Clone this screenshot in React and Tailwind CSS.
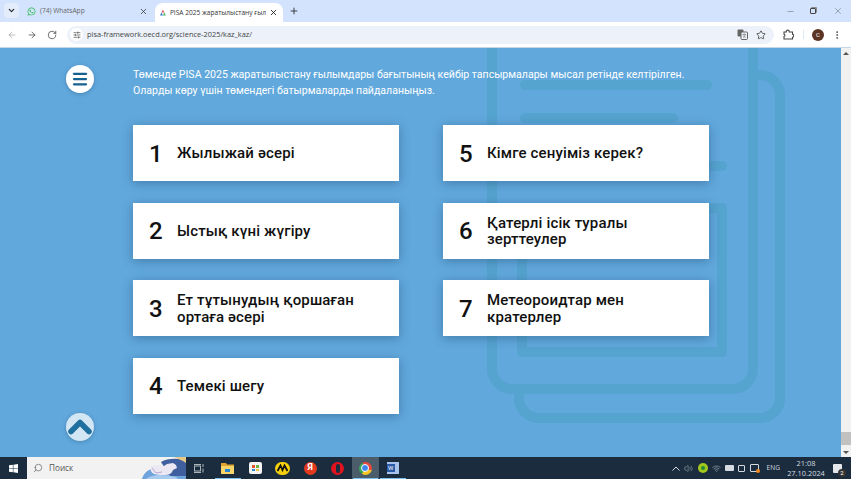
import React from "react";
import { FaWhatsapp } from "react-icons/fa";
import { ChevronDown, X, Plus, ArrowLeft, ArrowRight, RotateCw, SlidersHorizontal, Star, EllipsisVertical, Minus, Menu, ChevronUp, Search, Volume2, Wifi } from "lucide-react";

const left = [["1", "Жылыжай әсері"], ["2", "Ыстық күні жүгіру"], ["3", "Ет тұтынудың қоршаған ортаға әсері"], ["4", "Темекі шегу"]];
const right = [["5", "Кімге сенуіміз керек?"], ["6", "Қатерлі ісік туралы зерттеулер"], ["7", "Метеороидтар мен кратерлер"]];

function Card({ n, t }) {
  return (
    <div className="h-[56px] w-[266px] bg-white flex items-center shadow-[0_2px_10px_rgba(30,70,110,0.45)]">
      <span className="w-[44px] pl-[16px] pt-[1px] text-[24px] leading-none text-[#111] font-medium">{n}</span>
      <span className="w-[200px] pt-[1px] text-[15px] leading-[16.5px] font-medium text-[#111] tracking-[0.15px]">{t}</span>
    </div>
  );
}

function Watermark() {
  return (
    <svg className="absolute left-0 top-0 pointer-events-none" width="841" height="409" viewBox="0 48 841 409" fill="none" stroke="#55a3cf">
      <path d="M758 75h2a20 20 0 0 1 20 20v303a20 20 0 0 1-20 20H539a20 20 0 0 1-20-20v-4" strokeWidth="10" />
      <rect x="492" y="30" width="261" height="359" rx="20" strokeWidth="10" />
      <path d="M525 85h182M525 118h148M525 166h197" strokeWidth="10" strokeLinecap="round" />
      <rect x="522" y="208" width="200" height="144" strokeWidth="10" strokeLinejoin="round" />
    </svg>
  );
}

function TaskIcon({ children, active, bar }) {
  return (
    <div className={`relative h-full w-[27.5px] flex items-center justify-center ${active ? "bg-[#4b5d6b]" : ""}`}>
      {children}
      {bar && <div className="absolute bottom-0 left-[1px] right-[1px] h-[1px] bg-[#7cc0ee]" />}
    </div>
  );
}

export default function App() {
  return (
    <div className="w-[851px] h-[479px] overflow-hidden flex flex-col font-['Roboto',sans-serif]">
      {/* tab strip */}
      <div className="h-[22px] bg-[#d3e3fd] flex items-end text-[6.6px] font-['Open_Sans',sans-serif] text-[#444]">
        <div className="ml-[4px] mb-[4px] h-[15px] w-[15px] rounded bg-[#e3ecfb] flex items-center justify-center">
          <ChevronDown size={9} strokeWidth={3} className="text-[#222]" />
        </div>
        <div className="w-[136px] h-full flex items-center pl-[8px] pr-[7px]">
          <FaWhatsapp size={9} className="text-[#25b845]" />
          <span className="ml-[4px] flex-1 text-[#666]">(74) WhatsApp</span>
          <X size={9} strokeWidth={2} className="text-[#333]" />
        </div>
        <div className="w-[128px] h-[19px] bg-white rounded-t-lg flex items-center pl-[5px] pr-[5px]">
          <svg width="9" height="9" viewBox="0 0 10 10">
            <path d="M5 0l2.400 5H2.600z" fill="#d9534f" />
            <path d="M2.600 4.600L5 10H0z" fill="#3f7fd1" />
            <path d="M7.400 4.600L10 10H5z" fill="#57b368" />
          </svg>
          <span className="ml-[4px] flex-1 whitespace-nowrap text-[#333]">PISA 2025 жаратылыстану ғыл</span>
          <X size={9} strokeWidth={2.4} className="ml-[3px] shrink-0 text-[#222]" />
        </div>
        <div className="ml-[6px] h-[22px] w-[10px] flex items-center pb-[1px]">
          <Plus size={10} strokeWidth={2} className="text-[#222]" />
        </div>
        <div className="ml-auto h-full flex items-center text-[#555]">
          <Minus size={9} strokeWidth={1.2} className="mr-[15px]" />
          <div className="mr-[17px] relative w-[6px] h-[6px] border border-[#444] rounded-[1px] shadow-[1px_-1px_0_0_#888]" />
          <X size={10} strokeWidth={1.1} className="mr-[8px]" />
        </div>
      </div>

      {/* toolbar */}
      <div className="h-[26px] bg-white rounded-t-md flex items-center text-[#444] border-b border-[#c5d6e6]">
        <ArrowLeft size={10} strokeWidth={1.8} className="ml-[7px] text-[#aaa]" />
        <ArrowRight size={10} strokeWidth={1.8} className="ml-[10px]" />
        <RotateCw size={10} strokeWidth={1.8} className="ml-[10px]" />
        <div className="ml-[10px] w-[707px] h-[18px] rounded-full bg-[#edf2fa] flex items-center pl-[3px] pr-[8px]">
          <div className="w-[13px] h-[13px] rounded-full bg-white flex items-center justify-center">
            <SlidersHorizontal size={8} strokeWidth={2} />
          </div>
          <span className="ml-[4px] flex-1 text-[7.4px] font-['Open_Sans',sans-serif] text-[#444]">pisa-framework.oecd.org/science-2025/kaz_kaz/</span>
          <svg width="11" height="11" viewBox="0 0 11 11">
            <rect x="0.500" y="0.500" width="6" height="7" rx="1" fill="#666" />
            <rect x="4" y="3" width="6.500" height="7.500" rx="1" fill="#edf2fa" stroke="#666" />
            <path d="M5.500 5.500h3.500M7.200 4.500v1M6 8.500c1.300-.7 2-1.800 2.300-3M6.300 6.500c.4 1 1.300 1.700 2.500 2" fill="none" stroke="#666" strokeWidth="0.600" />
          </svg>
          <Star size={10} strokeWidth={2} className="ml-[8px]" />
        </div>
        <svg className="ml-[9px]" width="11" height="11" viewBox="0 0 11 11" fill="none" stroke="#444" strokeWidth="1.100">
          <path d="M1 3h2.200c0-2.500 3.100-2.500 3.100 0h3.200v2.200c1.700 0 1.700 3 0 3v1.800H1V7.500c1.300 0 1.300-2.300 0-2.300z" />
        </svg>
        <div className="ml-[9px] w-px h-[9px] bg-[#dfe6f3]" />
        <div className="ml-[8px] w-[12px] h-[12px] rounded-full bg-[#5c3426] text-white text-[6px] flex items-center justify-center shrink-0">C</div>
        <EllipsisVertical size={10} strokeWidth={2} className="ml-[3px] mr-[3px] translate-x-[5px]" />
      </div>

      {/* page */}
      <div className="relative flex-1 flex min-h-0">
        <div className="relative flex-1 bg-[#61a8dc] flex overflow-hidden">
          <Watermark />
          <div className="relative w-[133px] flex flex-col justify-between pl-[66px] pt-[17px] pb-[16px]">
            <div className="w-[28px] h-[28px] rounded-full bg-white flex items-center justify-center shadow-[0_1px_4px_rgba(30,70,110,0.35)]">
              <Menu size={18} strokeWidth={3} className="text-[#14628f]" />
            </div>
            <div className="w-[28px] h-[28px] rounded-full bg-[#d3e6f4] flex items-center justify-center shadow-[0_1px_4px_rgba(30,70,110,0.35)]">
              <ChevronUp size={36} strokeWidth={3.7} className="shrink-0 text-[#1f6f9f]" />
            </div>
          </div>
          <div className="relative flex-1 pt-[19px]">
            <p className="text-[10.55px] leading-[15.5px] text-white h-[58px]">
              Төменде PISA 2025 жаратылыстану ғылымдары бағытының кейбір тапсырмалары мысал ретінде келтірілген.
              <br />
              Оларды көру үшін төмендегі батырмаларды пайдаланыңыз.
            </p>
            <div className="flex gap-[44px]">
              <div className="flex flex-col gap-[21.67px]">
                {left.map(([n, t]) => <Card key={n} n={n} t={t} />)}
              </div>
              <div className="flex flex-col gap-[21.67px]">
                {right.map(([n, t]) => <Card key={n} n={n} t={t} />)}
              </div>
            </div>
          </div>
        </div>
        {/* scrollbar */}
        <div className="w-[10px] bg-[#f1f1f1] flex flex-col items-center justify-between">
          <div className="mt-[4px] w-0 h-0 border-x-[3px] border-x-transparent border-b-[3px] border-b-[#555]" />
          <div className="flex flex-col items-center w-full">
            <div className="w-full h-[13px] bg-[#c1c1c1] mb-[6px]" />
            <div className="mb-[3px] w-0 h-0 border-x-[3px] border-x-transparent border-t-[3px] border-t-[#555]" />
          </div>
        </div>
      </div>

      {/* taskbar */}
      <div className="h-[22px] bg-[#1a2c3e] flex items-center text-white">
        <div className="w-[27px] h-full flex items-center justify-center">
          <svg width="9" height="9" viewBox="0 0 10 10" fill="#fff">
            <path d="M0 1.400l4.300-.6v3.900H0zM4.900.7L10 0v4.700H4.900zM0 5.300h4.300v3.900L0 8.600zM4.900 5.300H10V10l-5.100-.7z" />
          </svg>
        </div>
        <div className="relative w-[159px] h-full bg-[#f2f2f2] flex items-center pl-[6px] text-[#555] overflow-hidden">
          <Search size={10} strokeWidth={1.5} className="-scale-x-100" />
          <span className="ml-[6px] text-[8.2px] font-['Open_Sans',sans-serif]">Поиск</span>
          <svg className="absolute right-0 top-0" width="44" height="22" viewBox="0 0 44 22">
            <path d="M0 22C2 15 8 11 14 12l20 2 10 2v6z" fill="#6ea3dc" />
            <path d="M19 5c6-4 16-4 25-2v16H28z" fill="#3f5f9e" />
            <path d="M32 0h12v6c-4-3-8-4-12-6z" fill="#e6c98a" />
            <path d="M9 9c5-1 9-1 13 0l3-2 6-1 3 2 1 3-4 2c-1 3-3 5-10 5s-11-1-12-4c-1-2 0-4 0-5z" fill="#ece8f3" />
            <path d="M10 11l4 5 6-1" fill="none" stroke="#b9a9cf" strokeWidth="1" />
            <path d="M4 22c5-5 20-5 30-2l2 2z" fill="#a9cbee" />
          </svg>
        </div>
        <div className="w-[26px] h-full flex items-center justify-center">
          <svg width="10" height="9" viewBox="0 0 10 9" fill="none" stroke="#aeb6bd" strokeWidth="1">
            <rect x="0.500" y="2" width="6" height="5" />
            <path d="M0 0.500h7M0 8.500h7M9 0v3M9 4.500v4" />
          </svg>
        </div>
        <div className="flex h-full ml-[2px]">
          <TaskIcon bar>
            <svg width="13" height="11" viewBox="0 0 13 11">
              <path d="M0 0h5l1 1.500h7V11H0z" fill="#e0a52e" />
              <rect x="0" y="3" width="13" height="8" fill="#f8d568" />
              <rect x="4" y="6" width="5" height="3" fill="#2a86d1" />
            </svg>
          </TaskIcon>
          <TaskIcon>
            <div className="w-[13px] h-[12px] rounded-[2px] bg-[#f4f4f4] grid grid-cols-2 gap-px p-[3px]">
              <i className="bg-[#e5532d]" /><i className="bg-[#6cb33f]" /><i className="bg-[#2a86d1]" /><i className="bg-[#f3c04a]" />
            </div>
          </TaskIcon>
          <TaskIcon>
            <div className="w-[15px] h-[13px] rounded-full bg-[#f5d10d] flex items-center justify-center">
              <svg width="11" height="8" viewBox="0 0 11 8" fill="none" stroke="#111" strokeWidth="1.800"><path d="M0.500 7L3.500 1.500 5.500 6 7.500 1.500 10.500 7" /></svg>
            </div>
          </TaskIcon>
          <TaskIcon>
            <div className="w-[13px] h-[13px] rounded-full bg-[#e2391f] text-white text-[9px] font-bold flex items-center justify-center">Я</div>
          </TaskIcon>
          <TaskIcon>
            <div className="w-[13px] h-[13px] rounded-full bg-[#e0141f] flex items-center justify-center">
              <div className="w-[4px] h-[9px] rounded-full bg-[#1a2c3e]" />
            </div>
          </TaskIcon>
          <TaskIcon active bar>
            <div className="w-[13px] h-[13px] rounded-full bg-[conic-gradient(#e8463a_0_30%,#f8c625_30%_60%,#35a853_60%_92%,#e8463a_92%)] flex items-center justify-center">
              <div className="w-[6px] h-[6px] rounded-full bg-[#3f86ee] border border-white box-content" />
            </div>
          </TaskIcon>
          <TaskIcon bar>
            <div className="w-[12px] h-[12px] bg-[#a9c4ec] flex items-center">
              <div className="w-[8px] h-[8px] bg-[#2b5aa8] text-white text-[6px] leading-[8px] text-center">W</div>
            </div>
          </TaskIcon>
        </div>
        <div className="ml-auto flex items-center h-full text-[#d5dbe0]">
          <svg width="8" height="5" viewBox="0 0 8 5" fill="none" stroke="#d5dbe0"><path d="M0.500 4.500L4 1l3.500 3.500" /></svg>
          <Volume2 size={9} strokeWidth={1.4} className="ml-[4px] text-[#aeb6bd]" />
          <div className="ml-[5px] w-[10px] h-[10px] rounded-full bg-[#a4c81a] flex items-center justify-center">
            <div className="w-[4px] h-[4px] rounded-full bg-[#1f8a3a]" />
          </div>
          <Wifi size={9} strokeWidth={1.6} className="ml-[4px] text-[#aeb6bd]" />
          <div className="ml-[4px] w-[9px] h-[6px] bg-[#d5dbe0] rounded-[1px]" />
          <div className="ml-[4px] w-[7px] h-[7px] border border-[#d5dbe0] rounded-[1px]" />
          <div className="relative ml-[5px] w-[9px] h-[8px] border border-[#d5dbe0] rounded-[1px]">
            <div className="absolute -right-[2px] -bottom-[2px] w-[4px] h-[4px] rounded-full bg-[#f58a1f]" />
          </div>
          <span className="w-[21px] text-right text-[6.6px] font-['Open_Sans',sans-serif]">ENG</span>
          <div className="ml-[6px] w-[40px] text-center text-[7.4px] leading-[10px] font-['Open_Sans',sans-serif]">
            <div>21:08</div>
            <div>27.10.2024</div>
          </div>
          <div className="relative ml-[7px] mr-[9px] w-[9px] h-[9px] bg-[#e6e9ec] rounded-[1px]">
            <div className="absolute -right-[4px] -bottom-[4px] w-[8px] h-[8px] rounded-full bg-[#333] text-white text-[6px] leading-[8px] text-center">2</div>
          </div>
        </div>
      </div>
    </div>
  );
}
